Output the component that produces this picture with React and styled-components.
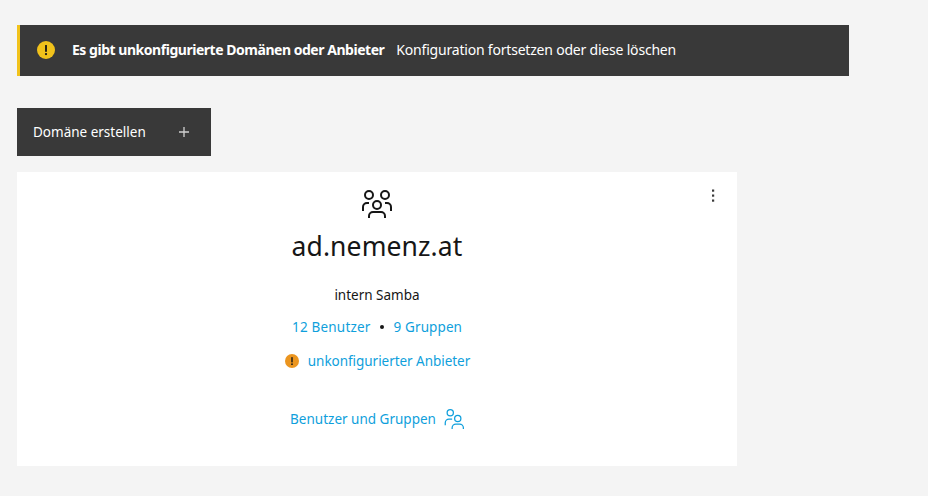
import React from "react";
import styled, { createGlobalStyle } from "styled-components";

const Global = createGlobalStyle`
  body {
    margin: 0;
    background: #f4f4f4;
    font-family: "Noto Sans", "Liberation Sans", sans-serif;
    color: #161616;
  }
`;

const Page = styled.div`
  width: 928px;
  height: 496px;
  box-sizing: border-box;
  padding: 25px 17px 0;
  overflow: hidden;
`;

const Banner = styled.div`
  display: flex;
  align-items: center;
  width: 832px;
  height: 51px;
  box-sizing: border-box;
  background: #393939;
  border-left: 3px solid #f1c21b;
  padding: 0 0 2px 17px;
  color: #fff;
  font-size: 14px;
`;

const BannerTitle = styled.span`
  font-weight: 700;
  margin-left: 17px;
  margin-right: 12px;
  letter-spacing: -0.47px;
`;

const BannerText = styled.span`
  letter-spacing: -0.2px;
`;

const CreateButton = styled.button`
  display: flex;
  align-items: center;
  justify-content: space-between;
  width: 194px;
  height: 48px;
  margin-top: 32px;
  padding: 0 20px 0 16px;
  box-sizing: border-box;
  border: 0;
  background: #393939;
  color: #fff;
  font: inherit;
  font-size: 13.5px;
`;

const ButtonLabel = styled.span`
  margin-top: -1px;
`;

const Card = styled.div`
  position: relative;
  display: flex;
  flex-direction: column;
  align-items: center;
  width: 720px;
  height: 294px;
  margin-top: 16px;
  padding-top: 16px;
  box-sizing: border-box;
  background: #fff;
`;

const Menu = styled.button`
  position: absolute;
  top: 7px;
  right: 8px;
  width: 32px;
  height: 32px;
  padding: 0;
  border: 0;
  background: none;
  display: flex;
  align-items: center;
  justify-content: center;
  color: #393939;
`;

const Title = styled.h2`
  margin: 7px 0 0;
  font-size: 26.5px;
  font-weight: 400;
  line-height: 38px;
  letter-spacing: 0.1px;
`;

const Kind = styled.div`
  margin-top: 20px;
  font-size: 13.5px;
  line-height: 20px;
`;

const Links = styled.div`
  display: flex;
  align-items: center;
  gap: 7.5px;
  margin-top: 12px;
  line-height: 20px;
`;

const Link = styled.a`
  display: inline-flex;
  align-items: center;
  gap: 8px;
  font-size: 13.5px;
  color: #0f9fdc;
  text-decoration: none;
  letter-spacing: ${(p) => p.$spacing || 0}px;
`;

const Dot = styled.span`
  width: 4px;
  height: 4px;
  margin: 0 2px;
  border-radius: 50%;
  background: #161616;
`;

const Warning = styled.div`
  display: flex;
  align-items: center;
  gap: 9px;
  margin-top: 14px;
  padding-left: 1px;
  line-height: 20px;
`;

const Manage = styled.div`
  margin-top: 37px;
  line-height: 20px;
`;

const WarnIcon = ({ size, color }) => (
  <svg width={size} height={size} viewBox="0 0 20 20">
    <circle cx="10" cy="10" r="10" fill={color} />
    <rect x="9" y="4.5" width="2" height="7.5" fill="#161616" />
    <circle cx="10" cy="14.5" r="1.25" fill="#161616" />
  </svg>
);

const EventsIcon = () => (
  <svg width="32" height="32" viewBox="0 0 32 32" fill="none" stroke="#161616" strokeWidth="2">
    <circle cx="8" cy="7" r="4" />
    <circle cx="24" cy="7" r="4" />
    <circle cx="16" cy="17" r="4" />
    <path d="M2 23v-4a4 4 0 0 1 4-4h2" />
    <path d="M30 23v-4a4 4 0 0 0-4-4h-2" />
    <path d="M8 30v-2a4 4 0 0 1 4-4h8a4 4 0 0 1 4 4v2" />
  </svg>
);

const UsersIcon = () => (
  <svg width="20" height="20" viewBox="0 0 32 32" fill="none" stroke="#0f9fdc" strokeWidth="2">
    <circle cx="10" cy="6" r="5" />
    <path d="M2 26v-4a6 6 0 0 1 6-6h5" />
    <circle cx="22" cy="15" r="5" />
    <path d="M13 32v-2a6 6 0 0 1 6-6h6a6 6 0 0 1 6 6v2" />
  </svg>
);

export default function App() {
  return (
    <Page>
      <Global />
      <Banner>
        <WarnIcon size={18} color="#f1c21b" />
        <BannerTitle>Es gibt unkonfigurierte Domänen oder Anbieter</BannerTitle>
        <BannerText>Konfiguration fortsetzen oder diese löschen</BannerText>
      </Banner>
      <CreateButton>
        <ButtonLabel>Domäne erstellen</ButtonLabel>
        <svg width="14" height="14" viewBox="0 0 14 14" stroke="#d0d0d0" strokeWidth="1.3">
          <path d="M7 2v10M2 7h10" />
        </svg>
      </CreateButton>
      <Card>
        <Menu>
          <svg width="16" height="16" viewBox="0 0 16 16" fill="currentColor">
            <rect x="7" y="2.5" width="2.2" height="2.2" />
            <rect x="7" y="7.5" width="2.2" height="2.2" />
            <rect x="7" y="12.5" width="2.2" height="2.2" />
          </svg>
        </Menu>
        <EventsIcon />
        <Title>ad.nemenz.at</Title>
        <Kind>intern Samba</Kind>
        <Links>
          <Link $spacing={0.2}>12 Benutzer</Link>
          <Dot />
          <Link $spacing={0.1}>9 Gruppen</Link>
        </Links>
        <Warning>
          <WarnIcon size={14} color="#eb951f" />
          <Link $spacing={-0.04}>unkonfigurierter Anbieter</Link>
        </Warning>
        <Manage>
          <Link>
            Benutzer und Gruppen
            <UsersIcon />
          </Link>
        </Manage>
      </Card>
    </Page>
  );
}
